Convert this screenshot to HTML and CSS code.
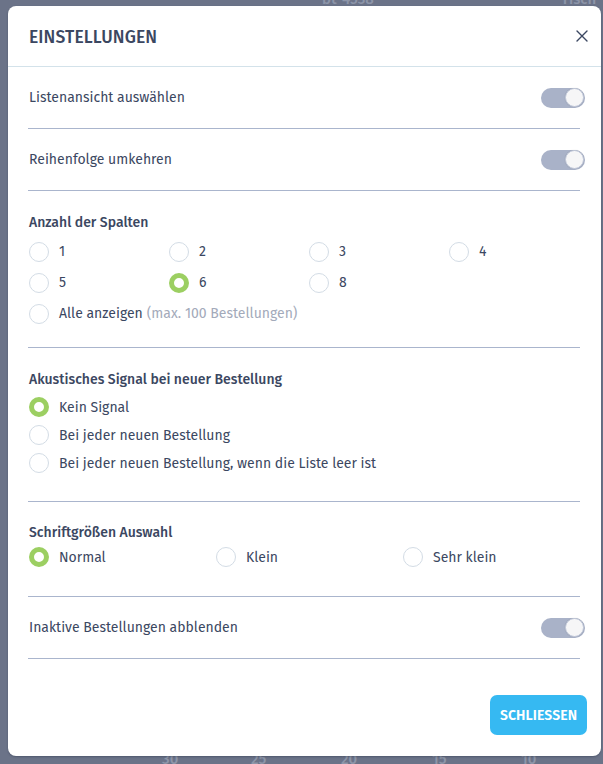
FILE: index.html
```html
<!DOCTYPE html>
<html lang="de">
<head>
<meta charset="utf-8">
<link rel="stylesheet" href="styles.css">
</head>
<body>
<div class="backdrop">
  <span class="bg-text bg-t1">bt-4538</span>
  <span class="bg-text bg-t2">Tisch 4</span>
  <span class="bg-num n1">30</span>
  <span class="bg-num n2">25</span>
  <span class="bg-num n3">20</span>
  <span class="bg-num n4">15</span>
  <span class="bg-num n5">10</span>
</div>
<div class="modal">
  <div class="modal-header">
    <h1 class="modal-title">EINSTELLUNGEN</h1>
    <button class="close-btn" aria-label="Schließen">
      <svg width="12" height="12" viewBox="0 0 12 12"><path d="M1 1L11 11M11 1L1 11" stroke="#3b4761" stroke-width="1.4" fill="none" stroke-linecap="round"/></svg>
    </button>
  </div>
  <div class="modal-body">
    <div class="row">
      <span class="row-label">Listenansicht auswählen</span>
      <span class="toggle"><span class="knob"></span></span>
    </div>
    <div class="row">
      <span class="row-label">Reihenfolge umkehren</span>
      <span class="toggle"><span class="knob"></span></span>
    </div>
    <div class="section sec-cols">
      <div class="section-title">Anzahl der Spalten</div>
      <div class="grid-cols">
        <label class="radio"><span class="dot"></span>1</label>
        <label class="radio"><span class="dot"></span>2</label>
        <label class="radio"><span class="dot"></span>3</label>
        <label class="radio"><span class="dot"></span>4</label>
        <label class="radio"><span class="dot"></span>5</label>
        <label class="radio"><span class="dot checked"></span>6</label>
        <label class="radio"><span class="dot"></span>8</label>
        <label class="radio wide"><span class="dot"></span>Alle anzeigen <span class="hint">(max. 100 Bestellungen)</span></label>
      </div>
    </div>
    <div class="section sec-sound">
      <div class="section-title">Akustisches Signal bei neuer Bestellung</div>
      <div class="list">
        <label class="radio"><span class="dot checked"></span>Kein Signal</label>
        <label class="radio"><span class="dot"></span>Bei jeder neuen Bestellung</label>
        <label class="radio"><span class="dot"></span>Bei jeder neuen Bestellung, wenn die Liste leer ist</label>
      </div>
    </div>
    <div class="section sec-font">
      <div class="section-title">Schriftgrößen Auswahl</div>
      <div class="grid-font">
        <label class="radio"><span class="dot checked"></span>Normal</label>
        <label class="radio"><span class="dot"></span>Klein</label>
        <label class="radio"><span class="dot"></span>Sehr klein</label>
      </div>
    </div>
    <div class="row">
      <span class="row-label">Inaktive Bestellungen abblenden</span>
      <span class="toggle"><span class="knob"></span></span>
    </div>
  </div>
  <div class="modal-footer">
    <button class="primary-btn">SCHLIESSEN</button>
  </div>
</div>
</body>
</html>
```

FILE: styles.css
```css
* { box-sizing: border-box; }
html, body { margin: 0; padding: 0; }
body {
  width: 603px;
  height: 764px;
  background: #6b7388;
  font-family: "Fira Sans", Roboto, "Noto Sans", sans-serif;
  color: #3b4761;
  overflow: hidden;
  position: relative;
  padding: 6px 0 0 8px;
}
.backdrop { position: absolute; inset: 0; }
.bg-text, .bg-num {
  position: absolute;
  font-size: 15px;
  color: #8d95a8;
  font-weight: 500;
}
.bg-t1 { left: 322px; top: -10px; }
.bg-t2 { left: 561px; top: -10px; }
.bg-num { top: 750px; color: #8e96a9; }
.n1 { left: 162px; } .n2 { left: 251px; } .n3 { left: 341px; } .n4 { left: 432px; } .n5 { left: 521px; }

.modal {
  position: relative;
  width: 593px;
  height: 750px;
  background: #ffffff;
  border-radius: 8px;
  display: flex;
  flex-direction: column;
  box-shadow: 0 1px 2px rgba(40, 50, 70, 0.4);
}
.modal-header {
  height: 61px;
  display: flex;
  align-items: center;
  justify-content: space-between;
  padding: 2px 12px 0 21px;
  border-bottom: 1px solid #d3e2ea;
}
.modal-title {
  margin: 0;
  font-size: 17.5px;
  font-weight: 500;
  letter-spacing: 0.1px;
  color: #3b4761;
}
.close-btn {
  border: 0;
  background: none;
  padding: 0;
  width: 14px;
  height: 14px;
  display: flex;
  align-items: center;
  justify-content: center;
  margin-top: -3px;
}
.modal-body {
  padding: 0 21px 0 20px;
}
.row {
  height: 62px;
  display: flex;
  align-items: center;
  justify-content: space-between;
  border-bottom: 1px solid #aab5cd;
  padding-left: 1px;
}
.row-label { font-size: 14px; }
.toggle {
  width: 44px;
  height: 20px;
  border-radius: 10px;
  background: #a9b2c8;
  margin-right: -5px;
  position: relative;
  display: flex;
  justify-content: flex-end;
  align-items: center;
  padding-right: 1px;
}
.knob {
  width: 19px;
  height: 19px;
  border-radius: 50%;
  background: #f6f6f7;
  border: 1px solid #c3cadb;
  box-shadow: 0 0 1px rgba(0,0,0,0.2);
}
.section {
  border-bottom: 1px solid #aab5cd;
  padding-left: 1px;
}
.section-title {
  font-size: 14px;
  font-weight: 500;
  height: 18px;
  line-height: 18px;
}
.radio {
  display: flex;
  align-items: center;
  font-size: 14px;
  color: #3b4761;
  white-space: nowrap;
}
.dot {
  width: 20px;
  height: 20px;
  border-radius: 50%;
  border: 1.5px solid #d3dce5;
  margin-right: 10px;
  flex: none;
}
.dot.checked {
  border: 5px solid #9ccf62;
}
.hint { color: #a3aaba; margin-left: 4px; }

.sec-cols { padding: 23px 0 18px 1px; }
.sec-cols .section-title { margin-bottom: 4px; }
.grid-cols {
  display: grid;
  grid-template-columns: repeat(4, 140px);
  grid-auto-rows: 31px;
}
.grid-cols .wide { grid-column: 1 / -1; }

.sec-sound { padding: 23px 0 24px 1px; }
.sec-sound .section-title { margin-bottom: 4px; }
.list { display: grid; grid-auto-rows: 28px; }

.sec-font { padding: 22px 0 25px 1px; }
.sec-font .section-title { margin-bottom: 1px; }
.grid-font {
  display: grid;
  grid-template-columns: repeat(3, 187px);
  grid-auto-rows: 28px;
}

.modal-footer {
  display: flex;
  justify-content: flex-end;
  padding: 36px 14px 0 0;
}
.primary-btn {
  width: 97px;
  height: 40px;
  border: 0;
  border-radius: 7px;
  background: #36b9f2;
  color: #ffffff;
  font-family: "Fira Sans", Roboto, "Noto Sans", sans-serif;
  font-size: 14px;
  font-weight: 600;
  letter-spacing: 0.1px;
  padding: 0;
}
```
